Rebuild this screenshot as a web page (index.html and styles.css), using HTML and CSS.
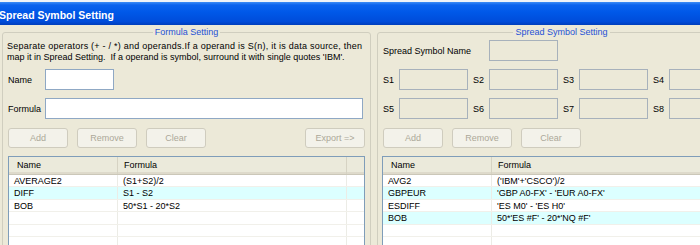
FILE: index.html
```html
<!DOCTYPE html>
<html lang="en">
<head>
  <meta charset="UTF-8">
  <title>Spread Symbol Setting</title>
  <link rel="stylesheet" href="styles.css">
</head>
<body>
  <div class="topstrip"></div>
  <div class="caption">Spread Symbol Setting</div>
  <div class="main">
    <fieldset class="group">
      <legend>Formula Setting</legend>
      <p class="hint"><span class="hint-wide">Separate operators (+ - / *) and operands.If a operand is S(n), it is data source, then</span><br>map it in Spread Setting.&nbsp; If a operand is symbol, surround it with single quotes 'IBM'.</p>
      <div class="field-row first-row"><label>Name</label><input class="txt txt-name"></div>
      <div class="field-row"><label>Formula</label><input class="txt txt-formula"></div>
      <div class="btn-row">
        <button disabled>Add</button>
        <button disabled>Remove</button>
        <button disabled>Clear</button>
        <button class="btn-export" disabled>Export =&gt;</button>
      </div>
      <div class="grid grid-left">
        <div class="thead"><span>Name</span><span>Formula</span><span></span></div>
        <div class="row"><span>AVERAGE2</span><span>(S1+S2)/2</span><span></span></div>
        <div class="row alt"><span>DIFF</span><span>S1 - S2</span><span></span></div>
        <div class="row"><span>BOB</span><span>50*S1 - 20*S2</span><span></span></div>
        <div class="row"><span></span><span></span><span></span></div>
        <div class="row"><span></span><span></span><span></span></div>
        <div class="row"><span></span><span></span><span></span></div>
      </div>
    </fieldset>

    <fieldset class="group">
      <legend>Spread Symbol Setting</legend>
      <div class="field-row ssn-row"><label class="ssn-label">Spread Symbol Name</label><input class="txt txt-off" disabled></div>
      <div class="s-row">
        <div class="s-cell"><label>S1</label><input class="txt txt-off" disabled></div>
        <div class="s-cell"><label>S2</label><input class="txt txt-off" disabled></div>
        <div class="s-cell"><label>S3</label><input class="txt txt-off" disabled></div>
        <div class="s-cell"><label>S4</label><input class="txt txt-off" disabled></div>
      </div>
      <div class="s-row">
        <div class="s-cell"><label>S5</label><input class="txt txt-off" disabled></div>
        <div class="s-cell"><label>S6</label><input class="txt txt-off" disabled></div>
        <div class="s-cell"><label>S7</label><input class="txt txt-off" disabled></div>
        <div class="s-cell"><label>S8</label><input class="txt txt-off" disabled></div>
      </div>
      <div class="btn-row">
        <button disabled>Add</button>
        <button disabled>Remove</button>
        <button disabled>Clear</button>
      </div>
      <div class="grid grid-right">
        <div class="thead"><span>Name</span><span>Formula</span></div>
        <div class="row"><span>AVG2</span><span>('IBM'+'CSCO')/2</span></div>
        <div class="row alt"><span>GBPEUR</span><span>'GBP A0-FX' - 'EUR A0-FX'</span></div>
        <div class="row"><span>ESDIFF</span><span>'ES M0' - 'ES H0'</span></div>
        <div class="row alt"><span>BOB</span><span>50*'ES #F' - 20*'NQ #F'</span></div>
        <div class="row"><span></span><span></span></div>
        <div class="row"><span></span><span></span></div>
      </div>
    </fieldset>
  </div>
</body>
</html>
```

FILE: styles.css
```css
* { box-sizing: border-box; }
html, body { margin: 0; }
body { width: 700px; height: 245px; overflow: hidden; background: #ECE9D8; font-family: 'Liberation Sans', Arial, sans-serif; font-size: 9px; color: #000; }

.topstrip { height: 2px; background: #EEF2F8; }
.caption { height: 23px; padding-top: 3px; line-height: 20px; font-size: 10.5px; font-weight: bold; color: #fff; text-indent: -1px; background: linear-gradient(#3C8CF6 0, #0A62EE 3px, #0058E8 45%, #004CDA 85%, #003EBB 100%); }

.main { display: flex; gap: 6px; padding-left: 2px; width: 760px; }
.group { flex: none; width: 369px; min-width: 0; min-height: 240px; margin: 2px 0 0; padding: 0 5px; border: 1px solid #D0CEBF; border-radius: 3px; }
.group legend { margin: 0 auto; padding: 0 2px; line-height: 11px; color: #1F51D6; }

.hint { margin: 3px 0 0 -1px; line-height: 11px; white-space: nowrap; }
.hint-wide { letter-spacing: 0.24px; }

.field-row { display: flex; align-items: center; height: 21px; margin-top: 8px; }
.field-row.first-row { margin-top: 6px; }
.field-row.ssn-row { margin-top: 2px; }
.field-row label { flex: none; width: 37px; }
.field-row .ssn-label { width: 106px; }

.txt { height: 21px; padding: 0 2px; border: 1px solid #8FA8C4; background: #fff; font: inherit; }
.txt-name { width: 69px; }
.txt-formula { width: 318px; }
.txt-off { width: 69px; border-color: #A7B1BB; background: #ECE9D8; }

.s-row { display: flex; margin-top: 8px; }
.s-cell { flex: none; display: flex; align-items: center; margin-right: 5px; }
.s-cell label { width: 16px; }

.btn-row { display: flex; gap: 9px; margin-top: 9px; }
.btn-row button { width: 60px; height: 20px; padding: 0; border: 1px solid #CFCCBE; border-radius: 3px; background: #F3F2EA; color: #ACA899; font: inherit; }
.btn-row .btn-export { margin-left: auto; }

.grid { margin-top: 8px; border: 1px solid #7F9DB9; background: #fff; }
.grid-right { margin-left: -1px; }
.grid-left .thead, .grid-left .row { grid-template-columns: 109px 229px 1fr; }
.grid-right .thead, .grid-right .row { grid-template-columns: 109px 1fr; }

.thead { display: grid; height: 18px; line-height: 16px; background: #EBEADB; border-bottom: 1px solid #CBC7B8; box-shadow: inset 0 -2px 0 #DEDACB; }
.thead span { padding-left: 8px; border-right: 1px solid #D6D3C3; }
.thead span + span { padding-left: 6px; }
.thead span:last-child { border-right: none; }
.grid-left .thead span:nth-child(2) { border-right: 1px solid #D6D3C3; }

.row { display: grid; height: 12.4px; line-height: 12px; border-bottom: 1px solid #F1F0EA; white-space: nowrap; }
.row span { padding-left: 5px; border-right: 1px solid #ECECE6; overflow: hidden; }
.row span:last-child { border-right: none; }
.row.alt { background: #DCFFFF; }
```
